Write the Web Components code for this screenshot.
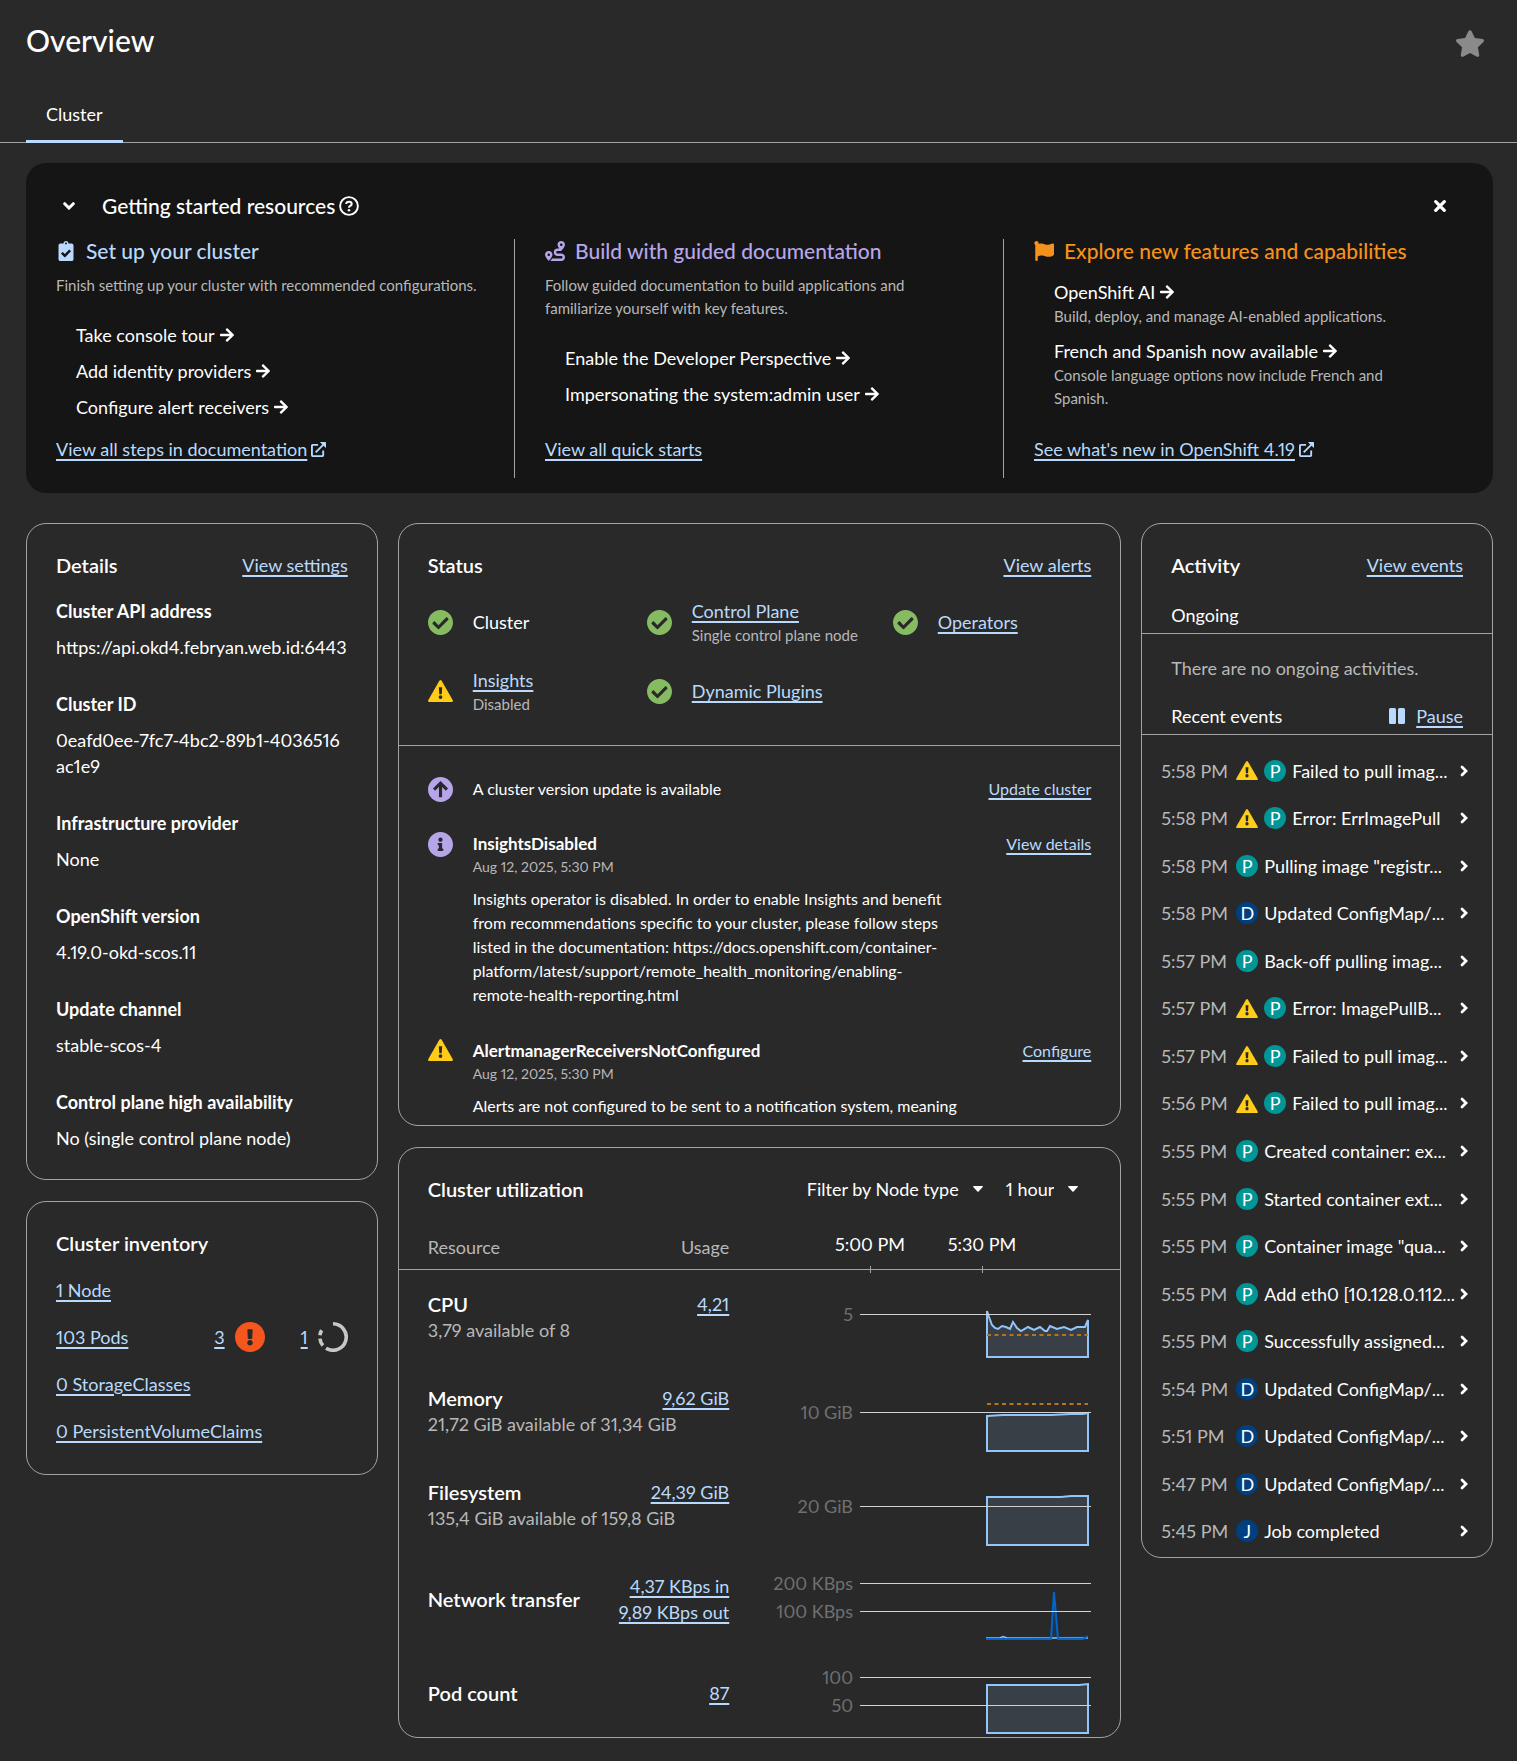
<!DOCTYPE html>
<html lang="en">
<head>
<meta charset="utf-8">
<meta name="viewport" content="width=device-width, initial-scale=1">
<title>Overview</title>
<style>
  html { background: #292929; }
  body {
    margin: 0;
    color: #fff;
    font: 18px/26px Lato, "Open Sans", sans-serif;
    font-variant-numeric: proportional-nums;
    --link: #b9dafc;
    --muted: #b8b8b8;
    --line: #a3a3a3;
    --small: 15px;
    --medium: 16px;
    --heading: 20px;
  }
</style>
</head>
<body>
<ov-page></ov-page>

<script>
const define = (name, markup, ready) => {
  const template = document.createElement('template');
  template.innerHTML = markup;
  customElements.define(name, class extends HTMLElement {
    constructor() {
      super();
      this.attachShadow({ mode: 'open' });
    }
    connectedCallback() {
      if (this.shadowRoot.childNodes.length) return;
      this.shadowRoot.append(template.content.cloneNode(true));
      if (ready) ready.call(this, this.shadowRoot);
    }
  });
};

/* ---------- icons: [viewBox, content] ---------- */
const bang = '<path d="M504 256c0 136.997-111.043 248-248 248S8 392.997 8 256C8 119.083 119.043 8 256 8s248 111.083 248 248zm-248 50c-25.405 0-46 20.595-46 46s20.595 46 46 46 46-20.595 46-46-20.595-46-46-46zm-43.673-165.346l7.418 136c.347 6.364 5.609 11.346 11.982 11.346h48.546c6.373 0 11.635-4.982 11.982-11.346l7.418-136c.375-6.874-5.098-12.654-11.982-12.654h-63.383c-6.884 0-12.356 5.78-11.981 12.654z"/>';
const ICONS = {
  star: ['0 0 576 512', '<path d="M259.3 17.8L194 150.2 47.9 171.5c-26.2 3.8-36.7 36.1-17.7 54.6l105.7 103-25 145.5c-4.5 26.3 23.2 46 46.4 33.7L288 439.6l130.7 68.7c23.2 12.2 50.9-7.4 46.4-33.7l-25-145.5 105.7-103c19-18.5 8.5-50.8-17.7-54.6L382 150.2 316.7 17.8c-11.7-23.6-45.6-23.9-57.4 0z"/>'],
  clipboard: ['0 0 384 512', '<path d="M336 64h-80c0-35.3-28.7-64-64-64s-64 28.7-64 64H48C21.5 64 0 85.5 0 112v352c0 26.5 21.5 48 48 48h288c26.5 0 48-21.5 48-48V112c0-26.5-21.5-48-48-48zM192 40c13.3 0 24 10.7 24 24s-10.7 24-24 24-24-10.7-24-24 10.7-24 24-24zm121.2 231.8l-143 141.8c-4.7 4.7-12.3 4.6-17-.1l-82.6-83.3c-4.7-4.7-4.6-12.3.1-17L99.1 285c4.7-4.7 12.3-4.6 17 .1l46 46.4 106-105.2c4.7-4.7 12.3-4.6 17 .1l28.2 28.4c4.7 4.8 4.6 12.3-.1 17z"/>'],
  route: ['0 0 512 512', '<path d="M416 320h-96c-17.6 0-32-14.4-32-32s14.4-32 32-32h96s96-107 96-160-43-96-96-96-96 43-96 96c0 25.5 22.2 63.4 45.3 96H320c-52.9 0-96 43.1-96 96s43.1 96 96 96h96c17.6 0 32 14.4 32 32s-14.4 32-32 32H185.5c-16 24.8-33.8 47.7-47.3 64H416c52.9 0 96-43.1 96-96s-43.1-96-96-96zm0-256c17.7 0 32 14.3 32 32s-14.3 32-32 32-32-14.3-32-32 14.3-32 32-32zM96 256c-53 0-96 43-96 96s96 160 96 160 96-107 96-160-43-96-96-96zm0 128c-17.7 0-32-14.3-32-32s14.3-32 32-32 32 14.3 32 32-14.3 32-32 32z"/>'],
  flag: ['0 0 512 512', '<path d="M349.565 98.783C295.978 98.783 251.721 64 184.348 64c-24.955 0-47.309 4.384-68.045 12.013a55.947 55.947 0 0 0 3.586-23.562C118.117 24.015 94.806 1.206 66.338.048 34.345-1.254 8 24.296 8 56c0 19.026 9.497 35.825 24 45.945V488c0 13.255 10.745 24 24 24h16c13.255 0 24-10.745 24-24v-94.4c28.311-12.064 63.582-22.122 114.435-22.122 53.588 0 97.844 34.783 165.217 34.783 48.169 0 86.667-16.294 122.505-40.858C506.84 359.452 512 349.571 512 339.045v-243.1c0-23.393-24.269-38.87-45.485-29.016-34.338 15.948-76.454 31.854-116.95 31.854z"/>'],
  arrow: ['0 0 448 512', '<path d="M190.5 66.9l22.2-22.2c9.4-9.4 24.6-9.4 33.9 0L441 239c9.4 9.4 9.4 24.6 0 33.9L246.6 467.3c-9.4 9.4-24.6 9.4-33.9 0l-22.2-22.2c-9.5-9.5-9.3-25 .4-34.3L311.4 296H24c-13.3 0-24-10.7-24-24v-32c0-13.3 10.7-24 24-24h287.4L190.9 101.2c-9.8-9.3-10-24.8-.4-34.3z"/>'],
  external: ['0 0 16 16', '<g fill="none" stroke="currentColor" stroke-width="2"><path d="M7.500 3H1.800Q1 3 1 3.800V14.200Q1 15 1.800 15H12.200Q13 15 13 14.200V9"/><path d="M5 11 13.500 2.500"/></g><path d="M9.500 0H15.400Q16 0 16 .6V6.500L13.700 4.300 11.700 2.300Z"/>'],
  check: ['8 8 496 496', '<path d="M504 256c0 136.967-111.033 248-248 248S8 392.967 8 256 119.033 8 256 8s248 111.033 248 248zM227.314 387.314l184-184c6.248-6.248 6.248-16.379 0-22.627l-22.627-22.627c-6.248-6.249-16.379-6.249-22.628 0L216 308.118l-70.059-70.059c-6.248-6.248-16.379-6.248-22.628 0l-22.627 22.627c-6.248 6.248-6.248 16.379 0 22.627l104 104c6.249 6.249 16.379 6.249 22.628.001z"/>'],
  bang: ['8 8 496 496', bang],
  info: ['8 8 496 496', '<path d="M256 8C119.043 8 8 119.083 8 256c0 136.997 111.043 248 248 248s248-111.003 248-248C504 119.083 392.957 8 256 8zm0 110c23.196 0 42 18.804 42 42s-18.804 42-42 42-42-18.804-42-42 18.804-42 42-42zm56 254c0 6.627-5.373 12-12 12h-88c-6.627 0-12-5.373-12-12v-24c0-6.627 5.373-12 12-12h12v-64h-12c-6.627 0-12-5.373-12-12v-24c0-6.627 5.373-12 12-12h64c6.627 0 12 5.373 12 12v100h12c6.627 0 12 5.373 12 12v24z"/>'],
  up: ['0 0 24 24', '<circle cx="12" cy="12" r="12"/><path d="M12 19.500V6.500M5.800 12.200 12 6l6.200 6.200" fill="none" stroke="#292929" stroke-width="3"/>'],
  warning: ['0 0 24 21', '<path d="M10.900.7Q12-.7 13.100.7L23.800 19.300Q24.300 21 22.800 21H1.200Q-.3 21 .2 19.300Z"/><path d="M10.400 7h3.200l-.4 6.600h-2.400Z" fill="#292929"/><circle cx="12" cy="16.300" r="1.800" fill="#292929"/>'],
  pause: ['0 0 16 16', '<rect width="7" height="16" rx="1.500"/><rect x="9" width="7" height="16" rx="1.500"/>'],
  down: ['0 0 12 8', '<path d="M1.700 1.700 6 6l4.300-4.300" fill="none" stroke="currentColor" stroke-width="3" stroke-linecap="round"/>'],
  right: ['0 0 8 12', '<path d="M2 2 6 6 2 10" fill="none" stroke="currentColor" stroke-width="2.800" stroke-linecap="round"/>'],
  caret: ['0 0 10 6', '<path d="M.6 0H9.400Q10.300.4 9.700 1L5.600 5.600Q5 6 4.400 5.600L.3 1Q-.3.4.6 0Z"/>'],
  close: ['0 0 12 12', '<path d="M1.700 1.700 10.300 10.300M10.300 1.700 1.700 10.300" fill="none" stroke="currentColor" stroke-width="3.200" stroke-linecap="round"/>'],
  help: ['0 0 20 20', '<circle cx="10" cy="10" r="8.900" fill="none" stroke="currentColor" stroke-width="1.900"/><path d="M7.200 8Q7.400 5.700 10 5.700 12.700 5.700 12.700 7.900 12.700 9.200 11.200 9.900 10 10.500 10 11.700" fill="none" stroke="currentColor" stroke-width="2"/><circle cx="10" cy="14.200" r="1.300"/>'],
  spinner: ['0 0 30 30', '<g fill="none" stroke="currentColor" stroke-width="3.600"><path d="M15 1.800A13.200 13.200 0 1 1 8 26.200"/><path d="M4.900 23.500A13.200 13.200 0 0 1 1.900 16.600"/><path d="M1.900 13.200A13.200 13.200 0 0 1 4.300 7.300" stroke-dasharray="5.200 9"/></g>']
};
define('ov-icon', `<style>
  :host { display: inline-flex; flex: none; }
  svg { display: block; fill: currentColor; }
</style>`, function (root) {
  const [box, content] = ICONS[this.getAttribute('name')];
  const w = this.getAttribute('w'), h = this.getAttribute('h') || w;
  root.innerHTML += `<svg width="${w}" height="${h}" viewBox="${box}" aria-hidden="true">${content}</svg>`;
});

define('ov-link', `<style>
  :host { display: inline-flex; align-items: center; gap: 4px; color: var(--link); white-space: nowrap; }
  a { color: inherit; text-decoration: underline 2px; text-underline-offset: 3px; }
</style><a href="#"><slot></slot></a><slot name="after"></slot>`);

/* Step link with a trailing arrow and an optional note below it */
define('ov-step', `<style>
  :host { display: block; padding-left: 20px; }
  a { display: inline-flex; align-items: center; gap: 5px; color: #fff; text-decoration: none; }
  ::slotted([slot=note]) { display: block; color: var(--muted); font-size: var(--small); line-height: 23px; }
</style><a href="#"><slot></slot><ov-icon name="arrow" w="14" h="16"></ov-icon></a><slot name="note"></slot>`);

define('ov-guide', `<style>
  :host { display: flex; flex-direction: column; padding: 0 30px; border-right: 1px solid var(--line); }
  :host(:last-child) { border-right: 0; }
  h3 { display: flex; align-items: center; gap: 10px; margin: 0; font-size: var(--heading); font-weight: 500; line-height: 24px; color: var(--tint); }
  ::slotted(p) { margin: 11px 0 0; color: var(--muted); font-size: var(--small); line-height: 23px; }
  .steps { display: flex; flex-direction: column; gap: var(--step-gap, 10px); margin-top: var(--steps-top, 25px); }
  .foot { margin-top: auto; padding-bottom: 16px; }
</style>
<h3><slot name="icon"></slot><slot name="title"></slot></h3>
<slot name="text"></slot>
<div class="steps"><slot></slot></div>
<div class="foot"><slot name="foot"></slot></div>`);

define('ov-resources', `<style>
  :host { display: block; background: #151515; border-radius: 20px; padding: 28px 0 15px; --heading: 21px; }
  header { display: flex; align-items: center; padding: 0 47px 0 37px; }
  h2 { display: flex; align-items: center; gap: 4px; margin: 0; font-size: var(--heading); font-weight: 500; line-height: 30px; }
  button { display: flex; padding: 0; border: 0; background: none; color: inherit; }
  .toggle { margin-right: 27px; }
  .close { margin-left: auto; }
  .cols { display: grid; grid-template-columns: repeat(3, 1fr); min-height: 239px; margin-top: 18px; }
  .icon { width: 20px; justify-content: center; }
</style>
<header>
  <button class="toggle" aria-label="Collapse"><ov-icon name="down" w="12" h="8"></ov-icon></button>
  <h2>Getting started resources <button aria-label="Help"><ov-icon name="help" w="20"></ov-icon></button></h2>
  <button class="close" aria-label="Close"><ov-icon name="close" w="12"></ov-icon></button>
</header>
<div class="cols">
  <ov-guide style="--tint:#b9dafc">
    <ov-icon class="icon" slot="icon" name="clipboard" w="16" h="20"></ov-icon>
    <span slot="title">Set up your cluster</span>
    <p slot="text">Finish setting up your cluster with recommended configurations.</p>
    <ov-step>Take console tour</ov-step>
    <ov-step>Add identity providers</ov-step>
    <ov-step>Configure alert receivers</ov-step>
    <ov-link slot="foot">View all steps in documentation<ov-icon slot="after" name="external" w="15"></ov-icon></ov-link>
  </ov-guide>
  <ov-guide style="--tint:#b6a6e9">
    <ov-icon class="icon" slot="icon" name="route" w="20"></ov-icon>
    <span slot="title">Build with guided documentation</span>
    <p slot="text">Follow guided documentation to build applications and<br>familiarize yourself with key features.</p>
    <ov-step>Enable the Developer Perspective</ov-step>
    <ov-step>Impersonating the system:admin user</ov-step>
    <ov-link slot="foot">View all quick starts</ov-link>
  </ov-guide>
  <ov-guide style="--tint:#f5921b;--steps-top:16px">
    <ov-icon class="icon" slot="icon" name="flag" w="20"></ov-icon>
    <span slot="title">Explore new features and capabilities</span>
    <ov-step>OpenShift AI<span slot="note">Build, deploy, and manage AI-enabled applications.</span></ov-step>
    <ov-step>French and Spanish now available<span slot="note">Console language options now include French and<br>Spanish.</span></ov-step>
    <ov-link slot="foot">See what's new in OpenShift 4.19<ov-icon slot="after" name="external" w="15"></ov-icon></ov-link>
  </ov-guide>
</div>`);

/* Outlined card: title and action in the header, body below */
define('ov-card', `<style>
  :host { display: block; box-sizing: border-box; border: 1px solid var(--line); border-radius: 20px; overflow: hidden; }
  header { display: flex; align-items: center; justify-content: space-between; padding: 26px 29px 0; line-height: 30px; }
  h2 { margin: 0; font-size: var(--heading); font-weight: 600; line-height: 30px; }
</style><header><h2><slot name="title"></slot></h2><slot name="action"></slot></header><slot></slot>`);

define('ov-details', `<style>
  :host { display: block; }
  dl { margin: 0; padding: 18px 29px 28px; display: grid; gap: 31px; }
  dt { font-weight: 700; }
  dd { margin: 10px 0 0; overflow-wrap: anywhere; }
</style>
<ov-card>
  <span slot="title">Details</span><ov-link slot="action">View settings</ov-link>
  <dl>
    <div><dt>Cluster API address</dt><dd>https://api.okd4.febryan.web.id:6443</dd></div>
    <div><dt>Cluster ID</dt><dd>0eafd0ee-7fc7-4bc2-89b1-4036516<br>ac1e9</dd></div>
    <div><dt>Infrastructure provider</dt><dd>None</dd></div>
    <div><dt>OpenShift version</dt><dd>4.19.0-okd-scos.11</dd></div>
    <div><dt>Update channel</dt><dd>stable-scos-4</dd></div>
    <div><dt>Control plane high availability</dt><dd>No (single control plane node)</dd></div>
  </dl>
</ov-card>`);

define('ov-inventory', `<style>
  :host { display: block; }
  ul { list-style: none; margin: 0; padding: 8px 29px 20px; }
  li { display: flex; align-items: center; height: 47px; }
  .bad { margin-left: auto; margin-right: 36px; gap: 10px; }
  .spin { gap: 10px; }
</style>
<ov-card>
  <span slot="title">Cluster inventory</span>
  <ul>
    <li><ov-link>1 Node</ov-link></li>
    <li><ov-link>103 Pods</ov-link>
      <ov-link class="bad">3<ov-icon slot="after" name="bang" w="30" style="color:#f4561d"></ov-icon></ov-link>
      <ov-link class="spin">1<ov-icon slot="after" name="spinner" w="30" style="color:#c7c7c7"></ov-icon></ov-link></li>
    <li><ov-link>0 StorageClasses</ov-link></li>
    <li><ov-link>0 PersistentVolumeClaims</ov-link></li>
  </ul>
</ov-card>`);

define('ov-health', `<style>
  :host { display: flex; align-items: center; gap: 20px; }
  .text { display: flex; flex-direction: column; align-items: flex-start; }
  ::slotted([slot=note]) { color: var(--muted); font-size: var(--small); line-height: 22px; }
</style><slot name="icon"></slot><div class="text"><slot></slot><slot name="note"></slot></div>`);

define('ov-alert', `<style>
  :host { display: grid; grid-template-columns: 25px minmax(0, 505px) 1fr; column-gap: 20px; font-size: var(--medium); line-height: 24px; }
  .act { text-align: right; }
  ::slotted(b) { display: block; font-size: 17px; font-weight: 700; }
  ::slotted(time) { display: block; color: var(--muted); font-size: 14px; line-height: 22px; }
  ::slotted(p) { margin: 9px 0 2px; line-height: 24px; }
</style><slot name="icon"></slot><div><slot></slot></div><div class="act"><slot name="action"></slot></div>`);

define('ov-status', `<style>
  :host { display: block; }
  .health { display: grid; grid-template-columns: 219px 246px 1fr; row-gap: 21px; padding: 18px 29px 30px; border-bottom: 1px solid var(--line); }
  .list { display: grid; gap: 30px; padding: 31px 29px 0; height: 379px; box-sizing: border-box; align-content: start; overflow: hidden; }
  .ok { color: #87bb62; } .warn { color: #ffcc17; } .note { color: #b6a6e9; }
</style>
<ov-card>
  <span slot="title">Status</span><ov-link slot="action">View alerts</ov-link>
  <div class="health">
    <ov-health><ov-icon class="ok" slot="icon" name="check" w="25"></ov-icon>Cluster</ov-health>
    <ov-health><ov-icon class="ok" slot="icon" name="check" w="25"></ov-icon><ov-link>Control Plane</ov-link><span slot="note">Single control plane node</span></ov-health>
    <ov-health><ov-icon class="ok" slot="icon" name="check" w="25"></ov-icon><ov-link>Operators</ov-link></ov-health>
    <ov-health><ov-icon class="warn" slot="icon" name="warning" w="25" h="22"></ov-icon><ov-link>Insights</ov-link><span slot="note">Disabled</span></ov-health>
    <ov-health><ov-icon class="ok" slot="icon" name="check" w="25"></ov-icon><ov-link>Dynamic Plugins</ov-link></ov-health>
  </div>
  <div class="list">
    <ov-alert><ov-icon class="note" slot="icon" name="up" w="25"></ov-icon>A cluster version update is available<ov-link slot="action">Update cluster</ov-link></ov-alert>
    <ov-alert><ov-icon class="note" slot="icon" name="info" w="25"></ov-icon><b>InsightsDisabled</b><time>Aug 12, 2025, 5:30 PM</time>
      <p>Insights operator is disabled. In order to enable Insights and benefit<br>from recommendations specific to your cluster, please follow steps<br>listed in the documentation: https://docs.openshift.com/container-<br>platform/latest/support/remote_health_monitoring/enabling-<br>remote-health-reporting.html</p>
      <ov-link slot="action">View details</ov-link></ov-alert>
    <ov-alert><ov-icon class="warn" slot="icon" name="warning" w="25" h="22"></ov-icon><b>AlertmanagerReceiversNotConfigured</b><time>Aug 12, 2025, 5:30 PM</time>
      <p>Alerts are not configured to be sent to a notification system, meaning<br>that you may not be notified in a timely fashion when important failures</p>
      <ov-link slot="action">Configure</ov-link></ov-alert>
  </div>
</ov-card>`);

/* Sparkline: 320 x 94, axis labels end at x=82, grid lines run from 89 to 320, samples from 216 to 317 */
const base = 87;
const area = pts => `<path d="M216 ${base}L${pts}L317 ${base}Z" fill="#92c5f9" fill-opacity=".15" stroke="#92c5f9" stroke-width="2"/>`;
const limit = y => `<path d="M216 ${y}H317" stroke="#b9731e" stroke-width="2" stroke-dasharray="4 3.500"/>`;
const CHARTS = {
  cpu: [[['5', 44]], area('216 41 218 47 221 55 224 58 227 59 231 56 235 57 239 59 242 52 246 58 250 61 257 57 263 60 269 57 274 61 276 61 279 56 286 59 293 57 300 60 306 57 314 57 317 50') + limit(65)],
  memory: [[['10 GiB', 48]], area('216 52 232 51 280 51 300 50 312 50 317 49') + limit(40)],
  disk: [[['20 GiB', 48]], area('216 39 290 39 300 38 317 38')],
  network: [[['200 KBps', 31], ['100 KBps', 59]], '<path d="M215 86H229L232 84.500 236 86H317" fill="none" stroke="#92c5f9" stroke-width="1.500"/><path d="M215 87H280L283 40 287 87H312L317 84" fill="#0066cc" fill-opacity=".2" stroke="#0066cc" stroke-width="2"/>'],
  pods: [[['100', 31], ['50', 59]], area('216 39 308 39 317 38')]
};
define('ov-chart', `<style>
  :host { display: block; }
  svg { display: block; margin-left: auto; overflow: visible; }
  text { fill: #707070; font: inherit; text-anchor: end; }
</style>`, function (root) {
  const [axis, marks] = CHARTS[this.getAttribute('data')];
  root.innerHTML += `<svg width="320" height="94" viewBox="0 0 320 94">${marks}${axis.map(([t, y]) =>
    `<path d="M89 ${y + .5}H320" stroke="#d2d2d2"/><text x="82" y="${y + 7}">${t}</text>`).join('')}</svg>`;
});

define('ov-utilization', `<style>
  :host { display: block; }
  .filters { display: flex; align-items: center; gap: 23px; padding-right: 13px; }
  label { display: flex; align-items: center; gap: 14px; }
  select { appearance: none; field-sizing: content; padding: 0; border: 0; background: none; color: #fff; font: inherit; }
  table { width: 100%; border-collapse: collapse; margin-top: 20px; margin-bottom: -3px; }
  th, td { padding: 0; font-weight: 400; text-align: left; vertical-align: middle; }
  thead th { height: 45px; color: var(--muted); border-bottom: 1px solid var(--line); }
  th:first-child { padding-left: 29px; width: 190px; }
  th:last-child, td:last-child { padding-right: 29px; width: 362px; }
  thead th:nth-child(2), td:nth-child(2) { text-align: right; white-space: nowrap; }
  tbody th { white-space: nowrap; }
  tbody th { width: 0; }
  strong { display: block; font-size: var(--heading); font-weight: 600; }
  small { display: block; max-width: 0; font-size: 18px; color: var(--muted); white-space: nowrap; }
  .use { display: flex; flex-direction: column; align-items: flex-end; min-height: 26px; }
  .two { min-height: 52px; }
  .times { display: block; margin-left: auto; overflow: visible; }
  .times text { fill: #fff; font: inherit; text-anchor: middle; }
</style>
<ov-card>
  <span slot="title">Cluster utilization</span>
  <div class="filters" slot="action">
    <label><select aria-label="Filter by Node type"><option>Filter by Node type</option></select><ov-icon name="caret" w="10" h="6"></ov-icon></label>
    <label><select aria-label="Time range"><option>1 hour</option></select><ov-icon name="caret" w="10" h="6"></ov-icon></label>
  </div>
  <table>
    <thead><tr><th>Resource</th><th>Usage</th><th>
      <svg class="times" width="320" height="44" viewBox="0 0 320 44"><text x="99" y="26">5:00 PM</text><text x="211" y="26">5:30 PM</text><path d="M99.500 41v7M211.500 41v7" stroke="#a3a3a3" stroke-width="1"/></svg></th></tr></thead>
    <tbody>
      <tr><th><strong>CPU</strong><small>3,79 available of 8</small></th><td><div class="use two"><ov-link>4,21</ov-link></div></td><td><ov-chart data="cpu"></ov-chart></td></tr>
      <tr><th><strong>Memory</strong><small>21,72 GiB available of 31,34 GiB</small></th><td><div class="use two"><ov-link>9,62 GiB</ov-link></div></td><td><ov-chart data="memory"></ov-chart></td></tr>
      <tr><th><strong>Filesystem</strong><small>135,4 GiB available of 159,8 GiB</small></th><td><div class="use two"><ov-link>24,39 GiB</ov-link></div></td><td><ov-chart data="disk"></ov-chart></td></tr>
      <tr><th><strong>Network transfer</strong></th><td><div class="use"><ov-link>4,37 KBps in</ov-link><ov-link>9,89 KBps out</ov-link></div></td><td><ov-chart data="network"></ov-chart></td></tr>
      <tr><th><strong>Pod count</strong></th><td><div class="use"><ov-link>87</ov-link></div></td><td><ov-chart data="pods"></ov-chart></td></tr>
    </tbody>
  </table>
</ov-card>`);

define('ov-event', `<style>
  :host { display: flex; align-items: center; padding: 0 24px 0 19px; min-width: 0; }
  time { flex: none; width: 75px; color: var(--muted); white-space: nowrap; }
  ov-icon[name=warning] { color: #ffcc17; margin-right: 6px; }
  .badge { flex: none; width: 22px; height: 22px; border-radius: 11px; margin-right: 6px; text-align: center; line-height: 22px; background: #009596; }
  .D, .J { background: #004080; }
  .msg { min-width: 0; white-space: nowrap; }
  button { display: flex; margin-left: auto; padding: 0; border: 0; background: none; color: #fff; }
</style>`, function (root) {
  const kind = this.getAttribute('kind');
  root.innerHTML += `<time>${this.getAttribute('time')}</time>${this.hasAttribute('warning') ? '<ov-icon name="warning" w="22" h="19"></ov-icon>' : ''}
    <span class="badge ${kind}">${kind}</span><span class="msg"><slot></slot></span>
    <button aria-label="Expand"><ov-icon name="right" w="8" h="12"></ov-icon></button>`;
});

define('ov-activity', `<style>
  :host { display: block; }
  .bar { display: flex; align-items: center; justify-content: space-between; padding: 0 29px 5px; border-bottom: 1px solid var(--line); }
  .first { margin-top: 22px; }
  p { margin: 0; padding: 21px 29px 22px; color: var(--muted); }
  .pause { display: flex; align-items: center; gap: 11px; color: var(--link); }
  button { padding: 0; border: 0; background: none; color: inherit; font: inherit; text-decoration: underline 2px; text-underline-offset: 3px; }
  .events { display: grid; grid-template-columns: minmax(0, 1fr); grid-auto-rows: 1fr; height: 808px; padding: 12px 0 2px; }
</style>
<ov-card>
  <span slot="title">Activity</span><ov-link slot="action">View events</ov-link>
  <div class="bar first">Ongoing</div>
  <p>There are no ongoing activities.</p>
  <div class="bar">Recent events<span class="pause"><ov-icon name="pause" w="16"></ov-icon><button>Pause</button></span></div>
  <div class="events">
    <ov-event time="5:58 PM" kind="P" warning>Failed to pull imag...</ov-event>
    <ov-event time="5:58 PM" kind="P" warning>Error: ErrImagePull</ov-event>
    <ov-event time="5:58 PM" kind="P">Pulling image "registr...</ov-event>
    <ov-event time="5:58 PM" kind="D">Updated ConfigMap/...</ov-event>
    <ov-event time="5:57 PM" kind="P">Back-off pulling imag...</ov-event>
    <ov-event time="5:57 PM" kind="P" warning>Error: ImagePullB...</ov-event>
    <ov-event time="5:57 PM" kind="P" warning>Failed to pull imag...</ov-event>
    <ov-event time="5:56 PM" kind="P" warning>Failed to pull imag...</ov-event>
    <ov-event time="5:55 PM" kind="P">Created container: ex...</ov-event>
    <ov-event time="5:55 PM" kind="P">Started container ext...</ov-event>
    <ov-event time="5:55 PM" kind="P">Container image "qua...</ov-event>
    <ov-event time="5:55 PM" kind="P">Add eth0 [10.128.0.112...</ov-event>
    <ov-event time="5:55 PM" kind="P">Successfully assigned...</ov-event>
    <ov-event time="5:54 PM" kind="D">Updated ConfigMap/...</ov-event>
    <ov-event time="5:51 PM" kind="D">Updated ConfigMap/...</ov-event>
    <ov-event time="5:47 PM" kind="D">Updated ConfigMap/...</ov-event>
    <ov-event time="5:45 PM" kind="J">Job completed</ov-event>
  </div>
</ov-card>`);

define('ov-page', `<style>
  :host { display: block; }
  .title { display: flex; justify-content: space-between; align-items: center; padding: 20px 32px 0 26px; }
  h1 { margin: 0; font-size: 30px; font-weight: 500; line-height: 40px; }
  .title button { display: flex; padding: 6px 0 0; border: 0; background: none; color: #8a8a8a; }
  nav { display: flex; margin-top: 31px; padding: 0 26px; border-bottom: 1px solid var(--line); }
  nav a { padding: 10px 20px 13px; margin-bottom: -1px; border-bottom: 3px solid var(--link); color: #fff; text-decoration: none; }
  main { padding: 20px 24px 18px 26px; }
  .grid { display: grid; grid-template-columns: repeat(12, minmax(0, 1fr)); gap: 20px; margin-top: 30px; align-items: start; }
  .col { display: grid; grid-template-columns: minmax(0, 1fr); gap: 21px; grid-column: span 3; }
  .wide { grid-column: span 6; }
</style>
<div class="title"><h1>Overview</h1><button aria-label="Favorite"><ov-icon name="star" w="30" h="27"></ov-icon></button></div>
<nav><a href="#">Cluster</a></nav>
<main>
  <ov-resources></ov-resources>
  <div class="grid">
    <div class="col"><ov-details></ov-details><ov-inventory></ov-inventory></div>
    <div class="col wide"><ov-status></ov-status><ov-utilization></ov-utilization></div>
    <div class="col"><ov-activity></ov-activity></div>
  </div>
</main>`);
</script>
</body>
</html>
